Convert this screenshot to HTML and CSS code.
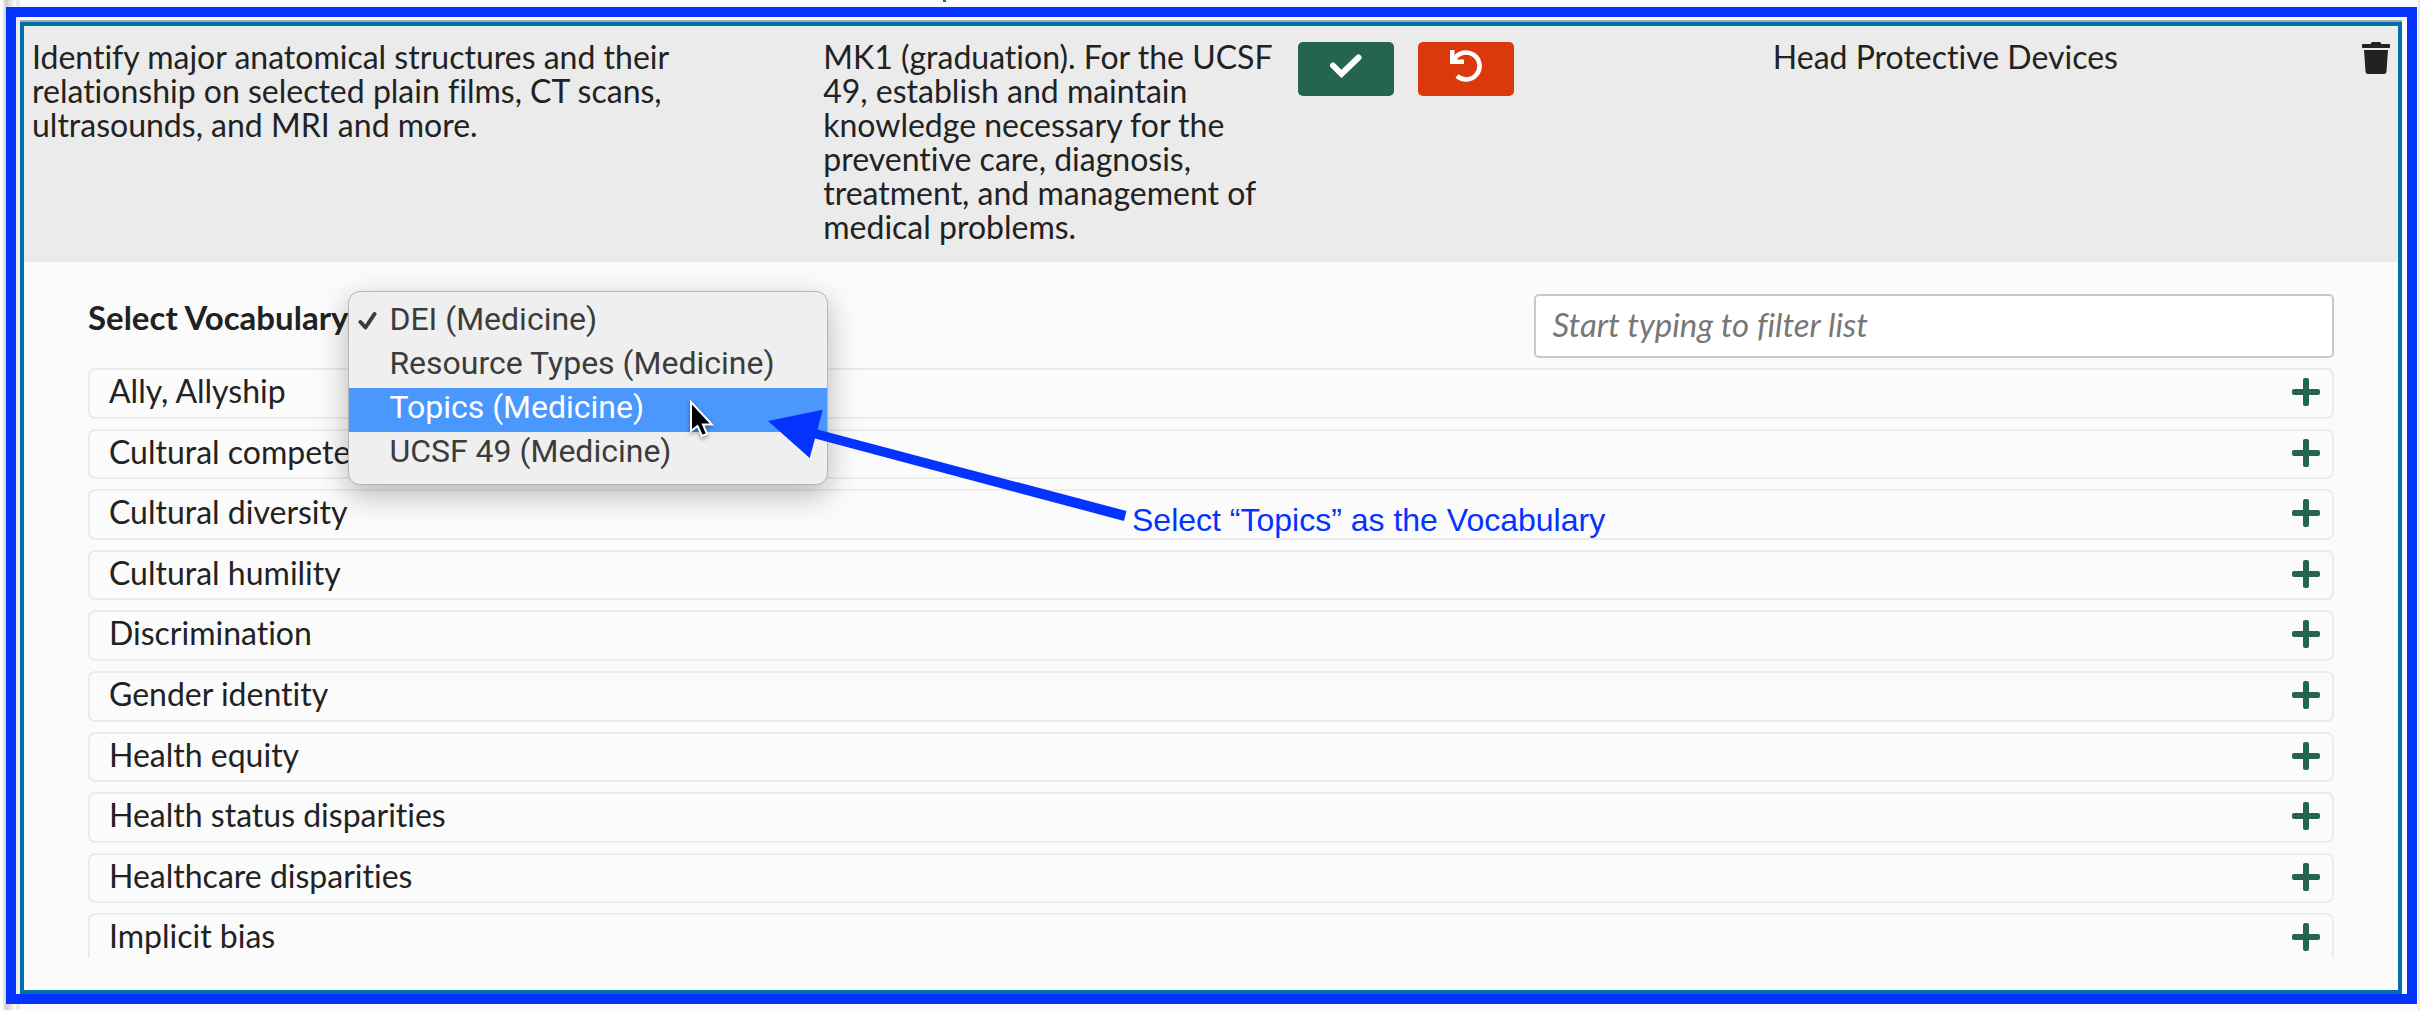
FILE: index.html
```html
<!DOCTYPE html>
<html lang="en">
<head>
<meta charset="utf-8">
<title>Manage terms</title>
<link rel="stylesheet" href="styles.css">
</head>
<body>
<svg class="sprite" aria-hidden="true">
  <symbol id="plus" viewBox="0 0 28 28"><rect x="11" y="0" width="6" height="28" rx="2"/><rect x="0" y="11" width="28" height="6" rx="2"/></symbol>
</svg>
<main class="frame">
  <section class="panel">
    <table class="objective">
      <colgroup><col class="col-title"><col class="col-competency"><col class="col-actions"><col class="col-terms"><col class="col-remove"></colgroup>
      <tbody>
        <tr>
          <td>Identify major anatomical structures and their<br>relationship on selected plain films, CT scans,<br>ultrasounds, and MRI and more.</td>
          <td>MK1 (graduation). For the UCSF 49, establish and maintain knowledge necessary for the preventive care, diagnosis, treatment, and management of medical problems.</td>
          <td>
            <div class="actions">
              <button class="btn save" type="button" aria-label="Save"><svg width="32" height="24" viewBox="0 0 32 24"><path d="M3 11.500 11.500 20 28.500 3.500" fill="none" stroke="#fff" stroke-width="6" stroke-linecap="round" stroke-linejoin="miter"/></svg></button>
              <button class="btn cancel" type="button" aria-label="Cancel"><svg width="32" height="32" viewBox="0 0 32 32"><path d="M4.500 9A13.500 13.500 0 1 1 7 26" fill="none" stroke="#fff" stroke-width="4.600"/><path d="M0 0H4.500V6L7 8 6 9.500H14V14H0z" fill="#fff"/></svg></button>
            </div>
          </td>
          <td>Head Protective Devices</td>
          <td><button class="remove" type="button" aria-label="Remove"><svg width="28" height="32" viewBox="0 0 28 32"><path d="M1 2H8.500L10 0H18L19.500 2H27Q28 2 28 3V5Q28 6 27 6H1Q0 6 0 5V3Q0 2 1 2zM2 8H26L24.500 29.500Q24.200 32 22 32H6Q3.800 32 3.500 29.500z" fill="#222"/></svg></button></td>
        </tr>
      </tbody>
    </table>
    <div class="manager">
      <div class="toolbar">
        <div class="vocabulary">
          <label for="vocabulary">Select Vocabulary</label>
          <div class="picker">
            <select id="vocabulary" size="4">
              <option>DEI (Medicine)</option>
              <option>Resource Types (Medicine)</option>
              <option selected>Topics (Medicine)</option>
              <option>UCSF 49 (Medicine)</option>
            </select>
            <svg class="tick" width="20" height="20" viewBox="0 0 20 20"><path d="M2.500 11 7.500 16.500 16.500 3" fill="none" stroke="#3c3c3c" stroke-width="4" stroke-linecap="round" stroke-linejoin="round"/></svg>
          </div>
        </div>
        <input class="filter" type="text" placeholder="Start typing to filter list" aria-label="Filter list">
      </div>
      <div class="scroller">
        <ul class="terms">
          <li><span>Ally, Allyship</span><button type="button" aria-label="Add"><svg><use href="#plus"/></svg></button></li>
          <li><span>Cultural competence</span><button type="button" aria-label="Add"><svg><use href="#plus"/></svg></button></li>
          <li><span>Cultural diversity</span><button type="button" aria-label="Add"><svg><use href="#plus"/></svg></button></li>
          <li><span>Cultural humility</span><button type="button" aria-label="Add"><svg><use href="#plus"/></svg></button></li>
          <li><span>Discrimination</span><button type="button" aria-label="Add"><svg><use href="#plus"/></svg></button></li>
          <li><span>Gender identity</span><button type="button" aria-label="Add"><svg><use href="#plus"/></svg></button></li>
          <li><span>Health equity</span><button type="button" aria-label="Add"><svg><use href="#plus"/></svg></button></li>
          <li><span>Health status disparities</span><button type="button" aria-label="Add"><svg><use href="#plus"/></svg></button></li>
          <li><span>Healthcare disparities</span><button type="button" aria-label="Add"><svg><use href="#plus"/></svg></button></li>
          <li><span>Implicit bias</span><button type="button" aria-label="Add"><svg><use href="#plus"/></svg></button></li>
        </ul>
      </div>
      <svg class="pointer" width="32" height="44" viewBox="0 0 32 44"><path d="M5 4V33L11.500 28 16 38 21 36 17 26.500H26z" fill="#000" stroke="#fff" stroke-width="2"/></svg>
      <svg class="arrow" width="370" height="130" viewBox="0 0 370 130"><path d="M4 21 58.700 9.700 53.500 29.500 362.500 111 360 121 51 38.500 45.700 58z" fill="#0433ff"/></svg>
      <p class="note">Select “Topics” as the Vocabulary</p>
    </div>
  </section>
</main>
</body>
</html>
```
FILE: styles.css
```css
* { box-sizing: border-box; }

body {
  margin: 0;
  padding: 7px 3px 6px 6px;
  font-family: Lato, "Open Sans", sans-serif;
  font-size: 32px;
  line-height: 34px;
  font-variant-ligatures: no-common-ligatures;
  color: #222;
  background:
    linear-gradient(#0070ad, #0070ad) 39% 0 / 3px 2px no-repeat,
    linear-gradient(#ebebeb, #ebebeb) right / 2px 100% no-repeat,
    linear-gradient(90deg, #fff 0, #fff 2px, #ccc 6px, #f4f4f4 14px, #fbfbfb 16px, #ebebeb 16px, #ebebeb 20px, #fbfbfb 20px);
}

button { padding: 0; border: 0; background: none; font: inherit; cursor: pointer; }
svg { display: block; }
.sprite { position: absolute; width: 0; height: 0; }

.frame {
  border: 10px solid #0433ff;
  padding: 3px 5px 0 4px;
}

.panel { border-top: 2px solid #a9aaa6; }

.objective {
  width: 100%;
  table-layout: fixed;
  border-collapse: separate;
  border-spacing: 0;
  border: 4px solid #0070ad;
  border-bottom: 0;
  background: #ebebeb;
}
.objective td { padding: 14px 8px 18px; vertical-align: top; }
.col-title { width: 33.33%; }
.col-competency, .col-actions, .col-terms { width: 20%; }
.col-remove { width: 6.67%; }

.actions { display: flex; gap: 24px; padding-top: 2px; }
.btn {
  display: flex;
  justify-content: center;
  width: 96px;
  height: 54px;
  border-radius: 5px;
}
.save { padding-top: 12px; background: #23654e; }
.cancel { padding-top: 8px; background: #db380c; }
.remove { display: block; margin-left: auto; padding-top: 2px; }

.manager {
  position: relative;
  padding: 32px 64px;
  border: 4px solid #0070ad;
  border-top: 0;
  background: #fbfbfb;
}

.toolbar {
  display: flex;
  justify-content: space-between;
  align-items: flex-start;
  margin-bottom: 10px;
}
.vocabulary { position: relative; padding-top: 6px; }
.vocabulary label { font-size: 33px; font-weight: 700; }

.picker {
  position: absolute;
  z-index: 1;
  top: -3px;
  left: 100%;
  width: 480px;
  padding: 8px 0;
  border: 1px solid #b4b4b4;
  border-radius: 12px;
  background: #efefef;
  box-shadow: 0 10px 30px rgba(0, 0, 0, .28);
}
.picker select {
  display: block;
  width: 100%;
  height: 176px;
  padding: 0;
  border: 0;
  outline: 0;
  overflow: hidden;
  background: none;
  font: 32px/44px Roboto, sans-serif;
  color: #3c3c3c;
}
.picker option { height: 44px; min-height: 44px; padding: 0 0 0 40px; line-height: 38px; }
.picker option:checked { background: linear-gradient(#4a98fe, #4a98fe); color: #fff; }
.tick { position: absolute; top: 19px; left: 9px; }

.filter {
  width: 35.6%;
  height: 64px;
  padding: 0 16px 4px;
  border: 2px solid #c9c9c9;
  border-radius: 5px;
  background: #fff;
  font: inherit;
  font-size: 33px;
  color: #222;
}
.filter::placeholder { font-style: italic; color: #777; opacity: 1; }

.scroller { height: 590px; overflow: hidden; }
.terms {
  display: grid;
  grid-auto-rows: 1fr;
  gap: 10px;
  height: 596px;
  margin: 0;
  padding: 0;
  list-style: none;
}
.terms li {
  display: flex;
  justify-content: space-between;
  align-items: flex-start;
  padding: 4px 12px 0 19px;
  border: 2px solid #ebebeb;
  border-radius: 7px;
}
.terms button { padding-top: 4px; }
.terms svg { width: 28px; height: 28px; fill: #23654e; }

/* Tutorial annotation drawn over the panel */
.pointer { position: absolute; z-index: 2; top: 136px; left: 662px; filter: drop-shadow(0 2px 2px rgba(0, 0, 0, .4)); }
.arrow { position: absolute; z-index: 2; top: 138px; left: 740px; }
.note {
  position: absolute;
  top: 241px;
  left: 1108px;
  margin: 0;
  font-family: "Liberation Sans", Arial, sans-serif;
  color: #0433ff;
}
```
